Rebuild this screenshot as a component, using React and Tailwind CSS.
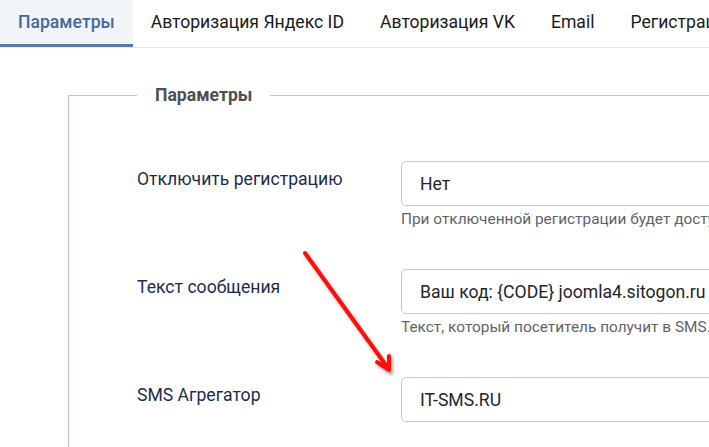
import React from "react";

const font = { fontFamily: "Roboto, 'Noto Sans', Arial, sans-serif" };

function Row({ label, value, help }) {
  return (
    <div className="flex mb-[39px]">
      <div className="w-[264px] shrink-0 pt-[5px] text-[17.6px] leading-[26px] text-[#1c2d4a]">
        {label}
      </div>
      <div className="w-[420px] shrink-0">
        <div className="h-[45px] border border-[#bcc9db] rounded-[5px] pl-[18px] pr-[18px] flex items-center text-[17.6px] leading-[26px] text-[#22262a] whitespace-nowrap overflow-hidden bg-white">
          <span>{value}</span>
        </div>
        {help && (
          <div className="mt-[2px] text-[15.4px] leading-[22px] text-[#5f6368] whitespace-nowrap overflow-hidden">
            {help}
          </div>
        )}
      </div>
    </div>
  );
}

export default function App() {
  const tabs = ["Авторизация Яндекс ID", "Авторизация VK", "Email", "Регистрация"];
  return (
    <div
      className="relative w-[709px] h-[447px] overflow-hidden bg-white"
      style={font}
    >
      <div className="flex h-[48px] border-b border-[#e4e8ee] whitespace-nowrap">
        <div className="h-[47px] px-[18px] flex items-center bg-[#f1f4f8] border-b-[3px] border-[#5a78a8] text-[17.6px] font-medium text-[#47689a]">
          Параметры
        </div>
        {tabs.map((t) => (
          <div
            key={t}
            className="h-[47px] px-[18px] flex items-center border-b-[3px] border-transparent text-[17.6px] text-[#1a1a1a]"
          >
            {t}
          </div>
        ))}
      </div>

      <div className="pt-[34px] pl-[68px]">
        <fieldset className="w-[900px] border border-[#b5c7e3] pl-[68px] pt-[53px]">
          <legend className="px-[18px] text-[17.6px] leading-[26px] font-bold text-[#4d4f52]">
            Параметры
          </legend>
          <Row
            label="Отключить регистрацию"
            value="Нет"
            help="При отключенной регистрации будет доступна только авторизация"
          />
          <Row
            label="Текст сообщения"
            value="Ваш код: {CODE} joomla4.sitogon.ru"
            help="Текст, который посетитель получит в SMS."
          />
          <Row label="SMS Агрегатор" value="IT-SMS.RU" />
        </fieldset>
      </div>

      <svg
        className="absolute left-0 top-0 pointer-events-none"
        width="709"
        height="447"
        viewBox="0 0 709 447"
      >
        <defs>
          <filter id="sh" x="-20%" y="-20%" width="140%" height="140%">
            <feDropShadow dx="2" dy="3" stdDeviation="1.5" floodColor="#000" floodOpacity="0.35" />
          </filter>
        </defs>
        <g filter="url(#sh)" stroke="#ff1010" strokeWidth="4" strokeLinecap="round" strokeLinejoin="round" fill="none">
          <line x1="305" y1="253" x2="388" y2="368" />
          <polyline points="377,362 389,370 389,356" />
        </g>
      </svg>
    </div>
  );
}
